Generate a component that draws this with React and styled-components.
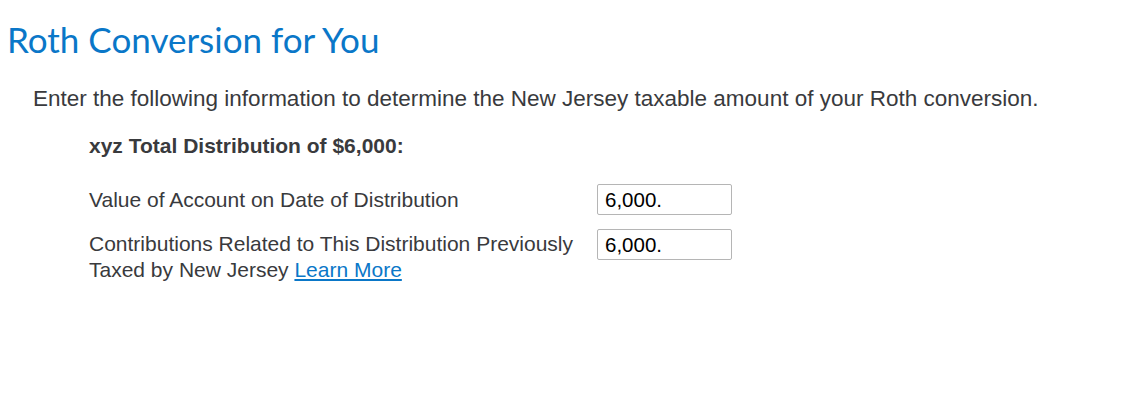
import React from 'react'
import styled, { createGlobalStyle } from 'styled-components'

const GlobalStyle = createGlobalStyle`
    body {
        margin: 0;
        background: #fff;
        font-family: "Liberation Sans", Arial, sans-serif;
    }
`

const Page = styled.main`
    padding: 17px 7px 0;
`

const Title = styled.h1`
    margin: 0;
    font-family: Lato, "Open Sans", sans-serif;
    font-weight: 400;
    font-size: 35px;
    line-height: 44px;
    color: #0a77c8;
`

const Intro = styled.p`
    margin: 25px 0 0 26px;
    font-size: 22.5px;
    line-height: 26px;
    color: #393a3d;
`

const Section = styled.section`
    margin: 21px 0 0 82px;
`

const Heading = styled.h2`
    margin: 0;
    font-size: 21px;
    line-height: 26px;
    font-weight: 700;
    color: #393a3d;
`

const Rows = styled.div`
    display: grid;
    gap: 14px;
    margin-top: 25px;
`

const Row = styled.div`
    display: grid;
    grid-template-columns: 500px 135px;
    column-gap: 8px;
    align-items: ${props => props.top ? 'start' : 'center'};
`

const Label = styled.label`
    font-size: 21px;
    line-height: 26px;
    color: #393a3d;
    padding-top: ${props => props.top ? '2px' : '0'};
`

const LearnMore = styled.a`
    color: #0a77c8;
    text-decoration: underline;
    cursor: pointer;
`

const Amount = styled.input`
    box-sizing: border-box;
    width: 135px;
    height: 31px;
    padding: 0 7px;
    border: 1px solid #b5b5b5;
    border-radius: 2px;
    font-family: "Liberation Sans", Arial, sans-serif;
    font-size: 20.5px;
    color: #000;
    background: #fff;
    outline: none;
`

export default function App() {
    return (
        <>
            <GlobalStyle />
            <Page>
                <Title>Roth Conversion for You</Title>
                <Intro>
                    Enter the following information to determine the New Jersey taxable amount of your Roth conversion.
                </Intro>
                <Section>
                    <Heading>xyz Total Distribution of $6,000:</Heading>
                    <Rows>
                        <Row>
                            <Label>Value of Account on Date of Distribution</Label>
                            <Amount defaultValue="6,000." />
                        </Row>
                        <Row top>
                            <Label top>
                                Contributions Related to This Distribution Previously Taxed by New Jersey{' '}
                                <LearnMore>Learn More</LearnMore>
                            </Label>
                            <Amount defaultValue="6,000." />
                        </Row>
                    </Rows>
                </Section>
            </Page>
        </>
    )
}
